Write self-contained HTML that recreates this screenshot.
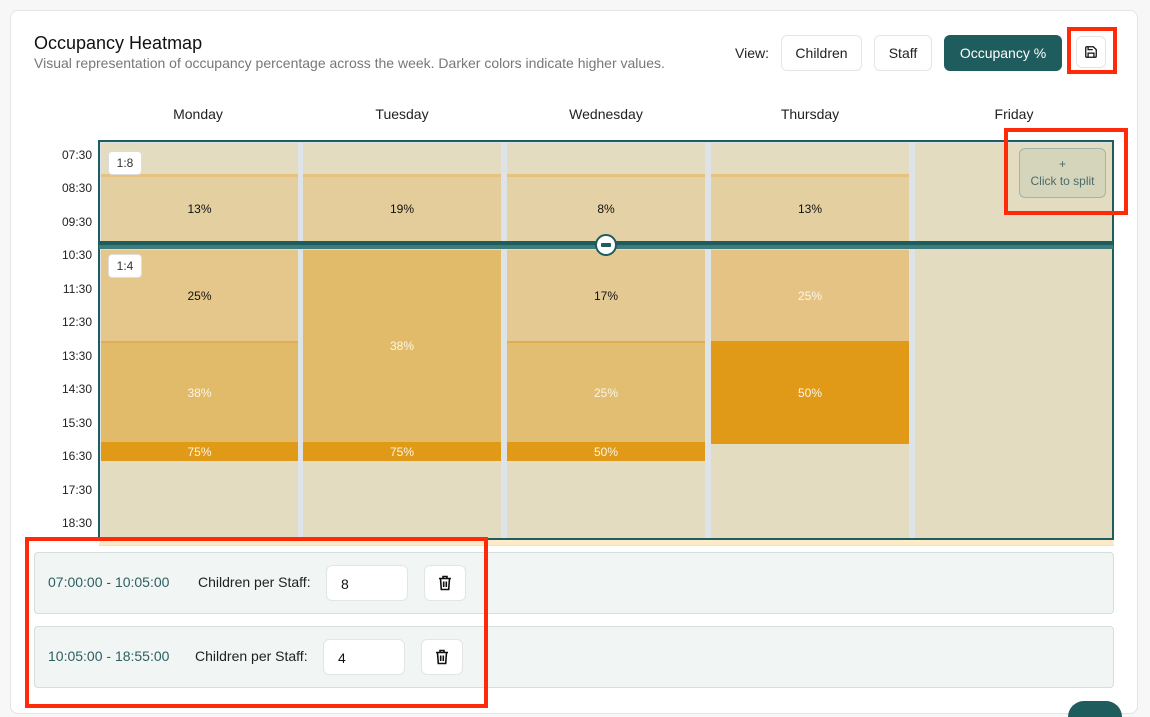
<!DOCTYPE html>
<html><head><style>
*{box-sizing:border-box;margin:0;padding:0}
html,body{width:1150px;height:717px;overflow:hidden}
body{background:#f7f7f7;font-family:"Liberation Sans",sans-serif;position:relative;color:#111}
.card{position:absolute;left:10px;top:10px;width:1128px;height:704px;background:#fff;border:1px solid #e2e4e6;border-radius:8px}
.a{position:absolute}
.btn{position:absolute;top:35px;height:36px;border:1px solid #e3e5e7;border-radius:6px;background:#fff;font-size:14px;display:flex;align-items:center;justify-content:center;color:#222}
.day{position:absolute;top:106px;font-size:14px;width:198px;text-align:center;color:#222}
.t{position:absolute;left:40px;width:52px;text-align:right;font-size:12px;color:#222}
.col{position:absolute;top:143px;height:396px;background:#e4dcc0}
.b{position:absolute;left:0;right:0;display:flex;align-items:center;justify-content:center;font-size:12px}
.w{color:#fbf5e6}
.tag{position:absolute;left:108px;width:34px;height:24px;background:#fff;border:1px solid #ddd;border-radius:4px;font-size:12px;display:flex;align-items:center;justify-content:center;color:#333}
.row{position:absolute;left:34px;width:1080px;height:62px;background:#f1f5f4;border:1px solid #d3dedd;border-radius:4px}
.row .rng{position:absolute;left:13px;top:21px;font-size:14px;color:#2d5f60}
.row .lab{position:absolute;top:21px;font-size:14px;color:#222}
.inp{position:absolute;top:12px;width:82px;height:36px;background:#fff;border:1px solid #e1e5e6;border-radius:6px;font-size:14px;padding:10px 14px}
.del{position:absolute;top:12px;width:42px;height:36px;background:#fff;border:1px solid #e1e5e6;border-radius:6px;display:flex;align-items:center;justify-content:center}
.red{position:absolute;border:4px solid #ff2a0a}
</style></head><body>
<div class="card"></div>
<div class="a" style="left:34px;top:33px;font-size:18px;color:#111">Occupancy Heatmap</div>
<div class="a" style="left:34px;top:55px;font-size:14px;color:#777">Visual representation of occupancy percentage across the week. Darker colors indicate higher values.</div>
<div class="a" style="left:735px;top:45px;font-size:14px;color:#222">View:</div>
<div class="btn" style="left:781px;width:81px">Children</div>
<div class="btn" style="left:874px;width:58px">Staff</div>
<div class="btn" style="left:944px;width:118px;background:#1f5c5d;border-color:#1f5c5d;color:#fff">Occupancy %</div>
<div class="btn" style="left:1076px;width:30px;top:36px;height:32px"><svg width="14" height="14" viewBox="0 0 24 24" fill="none" stroke="#111" stroke-width="2.2"><path d="M5 3h11l5 5v11a2 2 0 0 1-2 2H5a2 2 0 0 1-2-2V5a2 2 0 0 1 2-2z"/><path d="M7 21v-7h10v7M7 3v5h8"/></svg></div>
<div class="red" style="left:1067px;top:27px;width:50px;height:47px"></div>

<div class="day" style="left:99px">Monday</div>
<div class="day" style="left:303px">Tuesday</div>
<div class="day" style="left:507px">Wednesday</div>
<div class="day" style="left:711px">Thursday</div>
<div class="day" style="left:915px">Friday</div>

<div class="t" style="top:148px">07:30</div><div class="t" style="top:181px">08:30</div><div class="t" style="top:215px">09:30</div><div class="t" style="top:248px">10:30</div><div class="t" style="top:282px">11:30</div><div class="t" style="top:315px">12:30</div><div class="t" style="top:349px">13:30</div><div class="t" style="top:382px">14:30</div><div class="t" style="top:416px">15:30</div><div class="t" style="top:449px">16:30</div><div class="t" style="top:483px">17:30</div><div class="t" style="top:516px">18:30</div>

<div class="a" style="left:99px;top:140px;width:1015px;height:406px;background:#dde3e6"></div>
<div class="a" style="left:99px;top:539px;width:1015px;height:6px;background:#fdebc8"></div>
<div class="col" style="left:101px;width:197px">
 <div class="b" style="top:31px;height:67px;background:#e4cfa0;border-top:3px solid #e6c27f">13%</div>
 <div class="b" style="top:107px;height:91px;background:#e5c68b">25%</div>
 <div class="b w" style="top:198px;height:101px;background:#e2bb6a;border-top:2px solid #dfae52">38%</div>
 <div class="b w" style="top:299px;height:19px;background:#e09a18">75%</div>
</div>
<div class="col" style="left:303px;width:198px">
 <div class="b" style="top:31px;height:67px;background:#e4cd9b;border-top:3px solid #e6c27f">19%</div>
 <div class="b w" style="top:107px;height:192px;background:#e2bb6a">38%</div>
 <div class="b w" style="top:299px;height:19px;background:#e09a18">75%</div>
</div>
<div class="col" style="left:507px;width:198px">
 <div class="b" style="top:31px;height:67px;background:#e4d1a5;border-top:3px solid #e6c27f">8%</div>
 <div class="b" style="top:107px;height:91px;background:#e5c993">17%</div>
 <div class="b w" style="top:198px;height:101px;background:#e2be72;border-top:2px solid #dfae52">25%</div>
 <div class="b w" style="top:299px;height:19px;background:#e09a18">50%</div>
</div>
<div class="col" style="left:711px;width:198px">
 <div class="b" style="top:31px;height:67px;background:#e4cfa0;border-top:3px solid #e6c27f">13%</div>
 <div class="b w" style="top:107px;height:91px;background:#e5c384">25%</div>
 <div class="b w" style="top:198px;height:103px;background:#e09a18">50%</div>
</div>
<div class="col" style="left:915px;width:197px"></div>
<div class="a" style="left:98px;top:140px;width:1016px;height:400px;border:2px solid #1f5c5d"></div>
<div class="a" style="left:99px;top:241px;width:1014px;height:4px;background:#1f5c5d"></div>
<div class="a" style="left:99px;top:245px;width:1014px;height:4px;background:#3d7b7c"></div>
<div class="a" style="left:595px;top:234px;width:22px;height:22px;border-radius:50%;background:#fff;border:2px solid #1f5c5d"><div style="position:absolute;left:4px;top:7px;width:10px;height:4px;background:#1f5c5d;border-radius:1px"></div></div>
<div class="tag" style="top:151px">1:8</div>
<div class="tag" style="top:254px">1:4</div>
<div class="a" style="left:1019px;top:148px;width:87px;height:50px;background:#d5d5bb;border:1px solid #9fb5ad;border-radius:6px;font-size:12px;color:#4d6b69;text-align:center;line-height:17px;padding-top:7px">+<br>Click to split</div>
<div class="red" style="left:1004px;top:128px;width:124px;height:87px"></div>

<div class="row" style="top:552px"><span class="rng">07:00:00 - 10:05:00</span><span class="lab" style="left:163px">Children per Staff:</span><div class="inp" style="left:291px">8</div><div class="del" style="left:389px"><svg width="14" height="16" viewBox="0 0 14 16" fill="none" stroke="#111" stroke-width="1.6"><path d="M1 3.5h12M5 3V1.5h4V3M2.5 3.5l.8 11h7.4l.8-11M5.7 6.5v5.5M8.3 6.5v5.5"/></svg></div></div>
<div class="row" style="top:626px"><span class="rng">10:05:00 - 18:55:00</span><span class="lab" style="left:160px">Children per Staff:</span><div class="inp" style="left:288px">4</div><div class="del" style="left:386px"><svg width="14" height="16" viewBox="0 0 14 16" fill="none" stroke="#111" stroke-width="1.6"><path d="M1 3.5h12M5 3V1.5h4V3M2.5 3.5l.8 11h7.4l.8-11M5.7 6.5v5.5M8.3 6.5v5.5"/></svg></div></div>
<div class="red" style="left:25px;top:537px;width:463px;height:171px"></div>
<div class="a" style="left:1068px;top:701px;width:54px;height:16px;border-radius:27px 27px 0 0;background:#1f5c5d"></div>
</body></html>
